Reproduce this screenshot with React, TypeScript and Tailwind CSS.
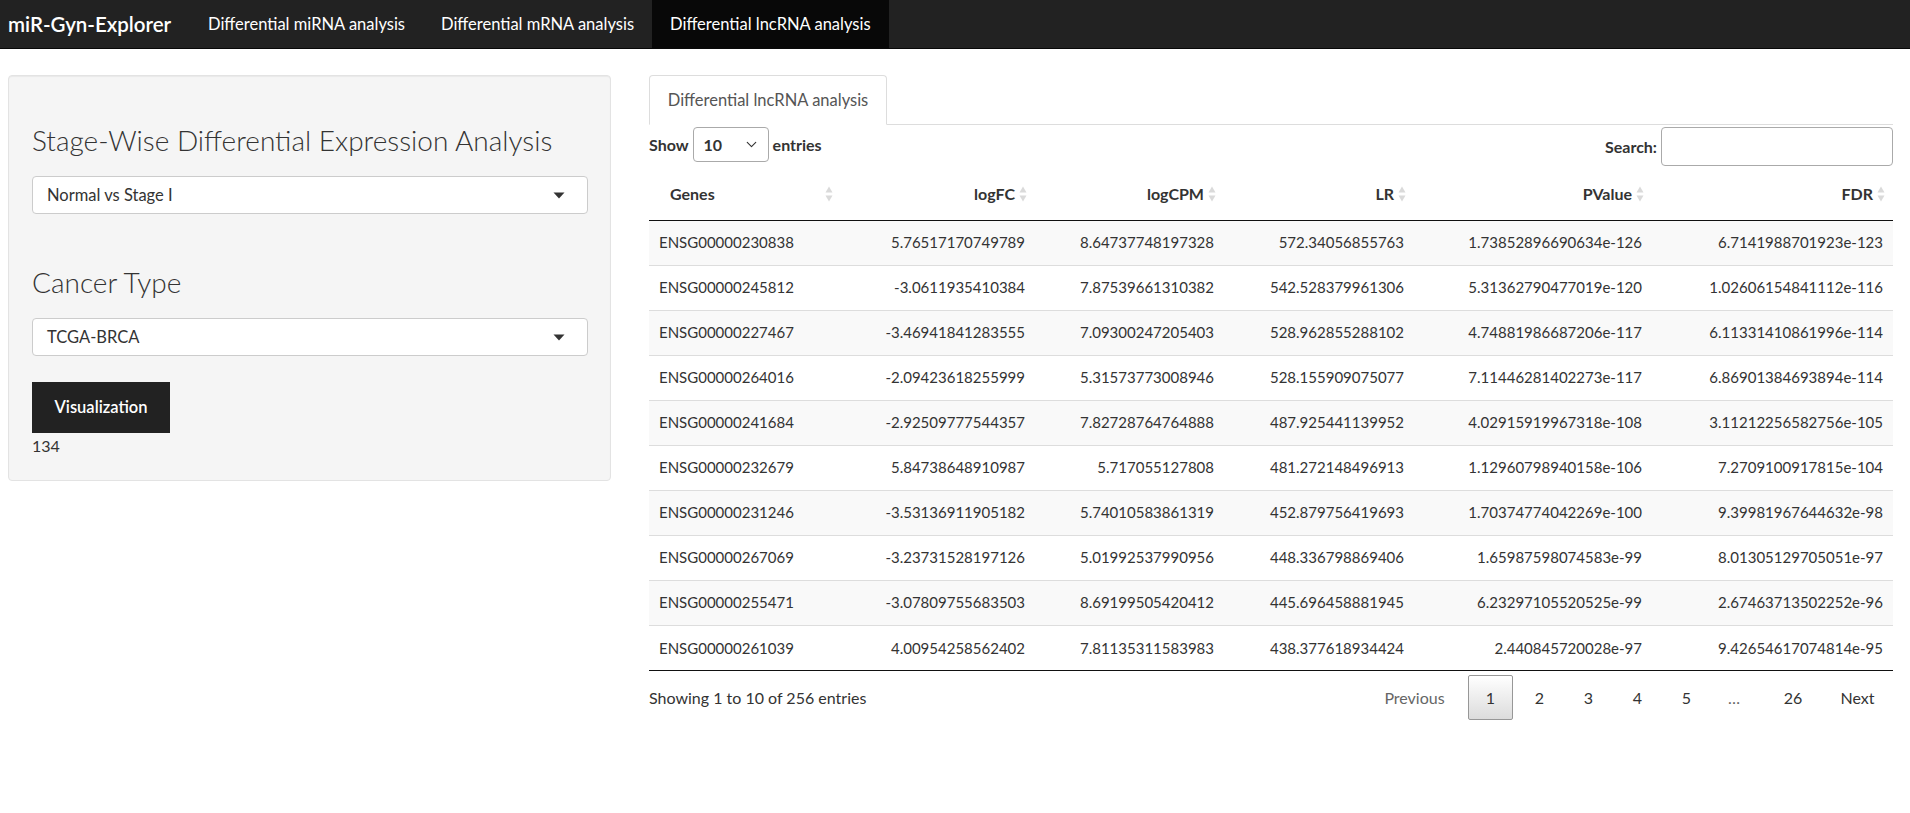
import { ChevronDown } from "lucide-react";

const rows = [
  ["ENSG00000230838", "5.76517170749789", "8.64737748197328", "572.34056855763", "1.73852896690634e-126", "6.7141988701923e-123"],
  ["ENSG00000245812", "-3.0611935410384", "7.87539661310382", "542.528379961306", "5.31362790477019e-120", "1.02606154841112e-116"],
  ["ENSG00000227467", "-3.46941841283555", "7.09300247205403", "528.962855288102", "4.74881986687206e-117", "6.11331410861996e-114"],
  ["ENSG00000264016", "-2.09423618255999", "5.31573773008946", "528.155909075077", "7.11446281402273e-117", "6.86901384693894e-114"],
  ["ENSG00000241684", "-2.92509777544357", "7.82728764764888", "487.925441139952", "4.02915919967318e-108", "3.11212256582756e-105"],
  ["ENSG00000232679", "5.84738648910987", "5.717055127808", "481.272148496913", "1.12960798940158e-106", "7.2709100917815e-104"],
  ["ENSG00000231246", "-3.53136911905182", "5.74010583861319", "452.879756419693", "1.70374774042269e-100", "9.39981967644632e-98"],
  ["ENSG00000267069", "-3.23731528197126", "5.01992537990956", "448.336798869406", "1.65987598074583e-99", "8.01305129705051e-97"],
  ["ENSG00000255471", "-3.07809755683503", "8.69199505420412", "445.696458881945", "6.23297105520525e-99", "2.67463713502252e-96"],
  ["ENSG00000261039", "4.00954258562402", "7.81135311583983", "438.377618934424", "2.440845720028e-97", "9.42654617074814e-95"],
];

const columns = [
  { label: "Genes", width: "w-[192px]", align: "text-left" },
  { label: "logFC", width: "w-[194px]", align: "text-right" },
  { label: "logCPM", width: "w-[189px]", align: "text-right" },
  { label: "LR", width: "w-[190px]", align: "text-right" },
  { label: "PValue", width: "w-[238px]", align: "text-right" },
  { label: "FDR", width: "w-[241px]", align: "text-right" },
];

const SortIcon = () => (
  <svg width="8" height="17" viewBox="0 0 8 17" className="absolute right-[8px] top-1/2 -translate-y-1/2">
    <path d="M4 1 L7.5 7 H0.5 Z" fill="#dadada" />
    <path d="M4 16 L7.5 10 H0.5 Z" fill="#dadada" />
  </svg>
);

const Caret = () => (
  <svg width="12" height="7" viewBox="0 0 12 7" className="shrink-0">
    <path d="M0.5 0.5 H11.5 L6 6.5 Z" fill="#333" />
  </svg>
);

const FakeSelect = ({ value }: { value: string }) => (
  <div className="flex h-[38px] w-[556px] items-center justify-between rounded-[4px] border border-[#cccccc] bg-white pl-[14px] pr-[22px] text-[16.5px] text-[#333]">
    <span>{value}</span>
    <Caret />
  </div>
);

export default function App() {
  return (
    <div className="min-h-screen bg-white font-['Lato','Liberation_Sans',sans-serif] text-[#333]">
      {/* navbar */}
      <nav className="flex h-[49px] items-stretch border-b border-[#080808] bg-[#222222] text-white">
        <div className="flex w-[190px] items-center pl-[8px] text-[20.5px] font-semibold">miR-Gyn-Explorer</div>
        <a className="flex items-center px-[18px] text-[16.5px]">Differential miRNA analysis</a>
        <a className="flex items-center px-[18px] text-[16.5px]">Differential mRNA analysis</a>
        <a className="flex items-center bg-[#080808] px-[18px] text-[16.5px]">Differential lncRNA analysis</a>
      </nav>

      <div className="flex items-start pt-[26px]">
        {/* sidebar */}
        <aside className="ml-[8px] h-[406px] w-[603px] rounded-[4px] border border-[#e3e3e3] bg-[#f5f5f5] px-[23px] pt-[44px] shadow-[inset_0_1px_1px_rgba(0,0,0,0.05)]">
          <h3 className="whitespace-nowrap text-[28px] font-light leading-[40px] text-[#333]">
            Stage-Wise Differential Expression Analysis
          </h3>
          <div className="mt-[16px]">
            <FakeSelect value="Normal vs Stage I" />
          </div>
          <h3 className="mt-[48px] text-[28px] font-light leading-[40px] text-[#333]">Cancer Type</h3>
          <div className="mt-[16px]">
            <FakeSelect value="TCGA-BRCA" />
          </div>
          <button className="mt-[26px] flex h-[51px] w-[138px] items-center justify-center bg-[#222222] text-[16.5px] font-semibold text-white">
            Visualization
          </button>
          <div className="mt-[3px] text-[16px] leading-[20px]">134</div>
        </aside>

        {/* main panel */}
        <main className="ml-[38px] w-[1244px]">
          <div className="flex border-b border-[#dddddd]">
            <div className="-mb-px flex h-[50px] w-[238px] items-center justify-center rounded-t-[4px] border border-[#dddddd] border-b-white bg-white text-[16.5px] text-[#555]">
              Differential lncRNA analysis
            </div>
          </div>

          <div className="mt-[2px] flex h-[39px] items-start justify-between">
            <div className="flex h-[35px] items-center gap-[4px] text-[16px] font-bold">
              <span>Show</span>
              <div className="flex h-[35px] w-[76px] items-center justify-between rounded-[4px] border border-[#aaaaaa] bg-white pl-[10px] pr-[8px]">
                <span>10</span>
                <ChevronDown size={17} strokeWidth={1.6} className="text-[#333]" />
              </div>
              <span>entries</span>
            </div>
            <div className="flex h-[39px] items-center gap-[4px] text-[16px] font-bold">
              <span>Search:</span>
              <div className="h-[39px] w-[232px] rounded-[4px] border border-[#aaaaaa] bg-white" />
            </div>
          </div>

          <table className="mt-[2px] w-full table-fixed border-collapse text-[15px]">
            <colgroup>
              {columns.map((c) => (
                <col key={c.label} className={c.width} />
              ))}
            </colgroup>
            <thead>
              <tr className="h-[52px] border-b border-[#111111]">
                {columns.map((c, i) => (
                  <th
                    key={c.label}
                    className={`relative text-[16px] font-bold ${c.align} ${i === 0 ? "pl-[21px]" : "pr-[20px]"}`}
                  >
                    {c.label}
                    <SortIcon />
                  </th>
                ))}
              </tr>
            </thead>
            <tbody>
              {rows.map((r, ri) => (
                <tr
                  key={r[0]}
                  className={`h-[45px] border-t border-[#dddddd] first:border-t-0 ${ri % 2 === 0 ? "bg-[#f9f9f9]" : "bg-white"}`}
                >
                  {r.map((v, ci) => (
                    <td key={ci} className={`px-[10px] ${columns[ci].align}`}>
                      {v}
                    </td>
                  ))}
                </tr>
              ))}
            </tbody>
          </table>

          <div className="flex items-center justify-between border-t border-[#111111] pt-[4px]">
            <div className="text-[16px]">Showing 1 to 10 of 256 entries</div>
            <div className="flex items-center pr-[2px] text-[16px]">
              <span className="flex h-[45px] w-[99px] items-center justify-center text-[#666]">Previous</span>
              <span className="ml-[4px] flex h-[45px] w-[45px] items-center justify-center rounded-[2px] border border-[#979797] bg-gradient-to-b from-white to-[#dcdcdc]">
                1
              </span>
              {["2", "3", "4", "5"].map((n) => (
                <span key={n} className="ml-[4px] flex h-[45px] w-[45px] items-center justify-center">
                  {n}
                </span>
              ))}
              <span className="ml-[4px] flex h-[45px] w-[42px] items-center justify-center text-[#666]">…</span>
              <span className="ml-[12px] flex h-[45px] w-[52px] items-center justify-center">26</span>
              <span className="ml-[5px] flex h-[45px] w-[67px] items-center justify-center">Next</span>
            </div>
          </div>
        </main>
      </div>
    </div>
  );
}
